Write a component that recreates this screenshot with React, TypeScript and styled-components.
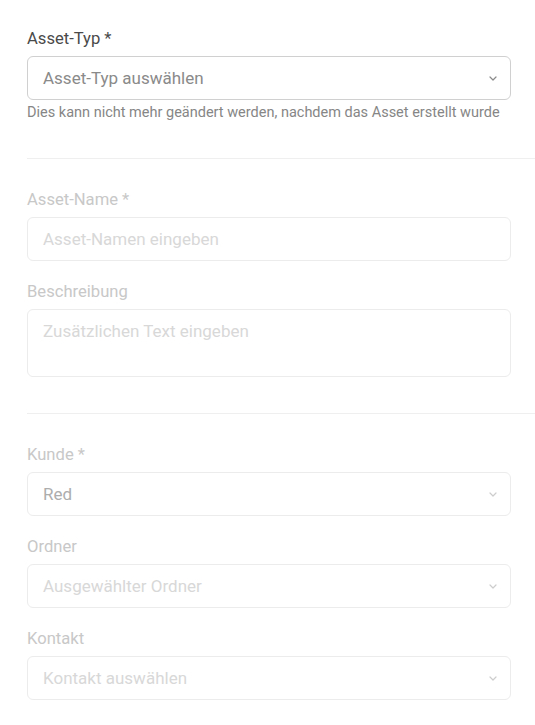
import React from "react";
import styled, { createGlobalStyle } from "styled-components";

const GlobalStyle = createGlobalStyle`
  body {
    margin: 0;
    background: #ffffff;
    font-family: Roboto, "Liberation Sans", Arial, sans-serif;
  }
`;

const Page = styled.div`
  width: 535px;
  padding: 28px 0 0 27px;
  box-sizing: border-box;
`;

const Section = styled.div<{ $first?: boolean }>`
  padding-top: ${(props) => (props.$first ? "0" : "30px")};
  padding-bottom: 36px;
  padding-right: 24px;
  border-bottom: 1px solid #efefef;

  &:last-child {
    border-bottom: none;
  }
`;

const Field = styled.div`
  margin-bottom: 20px;

  &:last-child {
    margin-bottom: 0;
  }
`;

const Label = styled.label<{ $disabled?: boolean }>`
  display: block;
  font-size: 16.6px;
  line-height: 22px;
  margin-bottom: 6px;
  color: ${(props) => (props.$disabled ? "#c8c8c8" : "#4a4a4a")};
`;

const Box = styled.div<{ $disabled?: boolean; $tall?: boolean }>`
  box-sizing: border-box;
  height: ${(props) => (props.$tall ? "68px" : "44px")};
  padding: ${(props) => (props.$tall ? "11px 15px" : "0 13px 0 15px")};
  display: flex;
  align-items: ${(props) => (props.$tall ? "flex-start" : "center")};
  justify-content: space-between;
  border: 1px solid ${(props) => (props.$disabled ? "#ececec" : "#d0d0d0")};
  border-radius: 6px;
  background: #ffffff;
`;

const Value = styled.span<{ $tone: "placeholder" | "muted" | "faint" }>`
  font-size: 17px;
  line-height: 20px;
  color: ${(props) =>
    props.$tone === "placeholder"
      ? "#8a8a8a"
      : props.$tone === "muted"
      ? "#adadad"
      : "#d8d8d8"};
`;

const Chevron = styled.svg<{ $disabled?: boolean }>`
  width: 8px;
  height: 5px;
  flex-shrink: 0;
  stroke: ${(props) => (props.$disabled ? "#cdcdcd" : "#8a8a8a")};
`;

const Help = styled.p`
  margin: 4px 0 0;
  font-size: 14.5px;
  line-height: 18px;
  color: #868686;
  white-space: nowrap;
`;

const Arrow: React.FC<{ disabled?: boolean }> = ({ disabled }) => (
  <Chevron $disabled={disabled} viewBox="0 0 8 5" fill="none">
    <path d="M1 1l3 3 3-3" strokeWidth="1.2" strokeLinecap="round" strokeLinejoin="round" />
  </Chevron>
);

const App: React.FC = () => {
  return (
    <>
      <GlobalStyle />
      <Page>
        <Section $first>
          <Field>
            <Label>Asset-Typ *</Label>
            <Box>
              <Value $tone="placeholder">Asset-Typ auswählen</Value>
              <Arrow />
            </Box>
            <Help>Dies kann nicht mehr geändert werden, nachdem das Asset erstellt wurde</Help>
          </Field>
        </Section>

        <Section>
          <Field>
            <Label $disabled>Asset-Name *</Label>
            <Box $disabled>
              <Value $tone="faint">Asset-Namen eingeben</Value>
            </Box>
          </Field>
          <Field>
            <Label $disabled>Beschreibung</Label>
            <Box $disabled $tall>
              <Value $tone="faint">Zusätzlichen Text eingeben</Value>
            </Box>
          </Field>
        </Section>

        <Section>
          <Field>
            <Label $disabled>Kunde *</Label>
            <Box $disabled>
              <Value $tone="muted">Red</Value>
              <Arrow disabled />
            </Box>
          </Field>
          <Field>
            <Label $disabled>Ordner</Label>
            <Box $disabled>
              <Value $tone="faint">Ausgewählter Ordner</Value>
              <Arrow disabled />
            </Box>
          </Field>
          <Field>
            <Label $disabled>Kontakt</Label>
            <Box $disabled>
              <Value $tone="faint">Kontakt auswählen</Value>
              <Arrow disabled />
            </Box>
          </Field>
        </Section>
      </Page>
    </>
  );
};

export default App;
